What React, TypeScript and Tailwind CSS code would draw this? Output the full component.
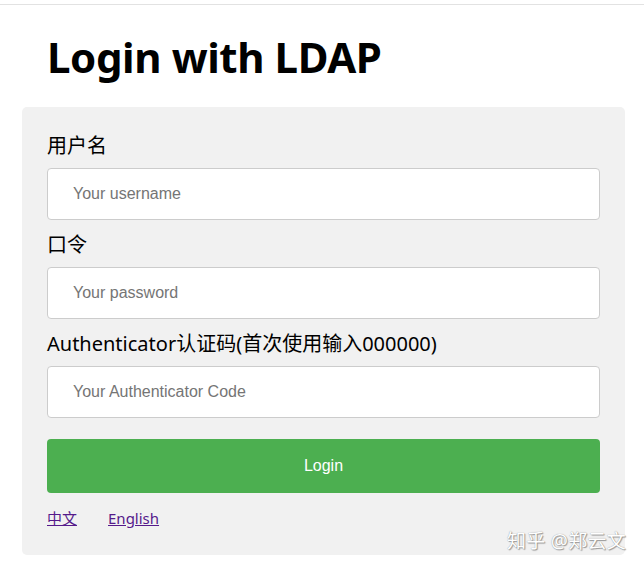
const cjk = "font-['Noto_Sans','Noto_Sans_CJK_SC',sans-serif]";

function Field({ label, placeholder, type = 'text' }: { label: string; placeholder: string; type?: string }) {
  return (
    <div className="mb-[11px]">
      <label className={`${cjk} block h-[28px] text-[20px] leading-[28px] text-black mb-[8px] whitespace-nowrap`}>{label}</label>
      <input
        type={type}
        placeholder={placeholder}
        className="block w-full h-[52px] rounded-[4px] border border-[#cccccc] bg-white px-[25px] text-[16px] font-['Liberation_Sans',sans-serif] text-black placeholder:text-[#757575] outline-none"
      />
    </div>
  );
}

export default function App() {
  return (
    <div className="relative w-[644px] h-[569px] bg-white overflow-hidden">
      <div className="h-[4px]" />
      <div className="h-px bg-[#e2e2e2]" />
      <h1 className="font-['Noto_Sans',sans-serif] font-bold text-[42px] leading-[56px] text-black pl-[47px] pt-[24px] pb-[22px] tracking-[-0.4px]">
        Login with LDAP
      </h1>
      <div className="mx-[22px] w-[603px] bg-[#f1f1f1] rounded-[5px] px-[25px] pt-[25px] pb-[25px]">
        <Field label="用户名" placeholder="Your username" />
        <Field label="口令" placeholder="Your password" type="password" />
        <Field label="Authenticator认证码(首次使用输入000000)" placeholder="Your Authenticator Code" />
        <button className="mt-[10px] w-full h-[54px] rounded-[4px] bg-[#4caf50] text-white text-[16px] font-['Liberation_Sans',sans-serif]">
          Login
        </button>
        <div className={`${cjk} mt-[13px] flex gap-[31px] h-[24px] text-[15px] leading-[24px] text-[#551a8b]`}>
          <a href="#" className="underline">中文</a>
          <a href="#" className="underline">English</a>
        </div>
      </div>
      <div className={`${cjk} absolute left-[507px] top-[527px] text-[19px] tracking-[0.3px] text-white [text-shadow:0_0_1px_#888,1px_1px_1px_#999]`}>
        知乎 @郑云文
      </div>
    </div>
  );
}
